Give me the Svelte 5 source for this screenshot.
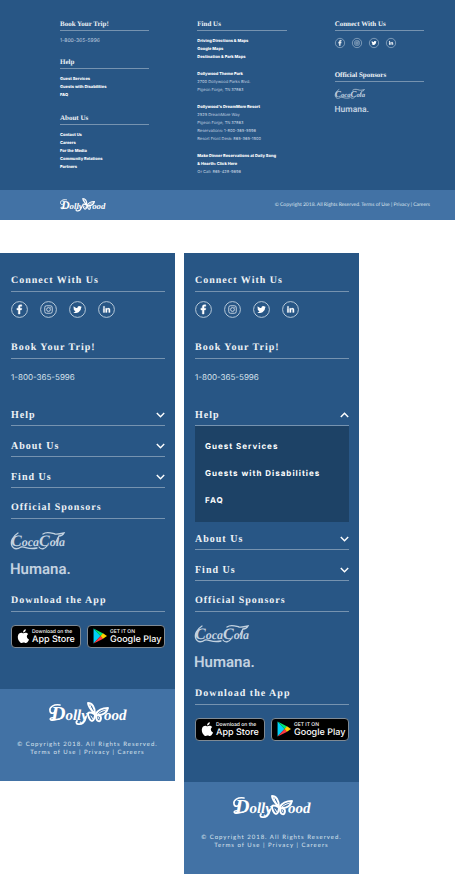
<script>
  const helpLinks = ['Guest Services', 'Guests with Disabilities', 'FAQ'];
  const aboutLinks = ['Contact Us', 'Careers', 'For the Media', 'Community Relations', 'Partners'];
  const mapLinks = ['Driving Directions & Maps', 'Google Maps', 'Destination & Park Maps'];
  const legalLinks = ['Terms of Use', 'Privacy', 'Careers'];
  const networks = ['Facebook', 'Instagram', 'Twitter', 'LinkedIn'];

  const accordion = [
    { title: 'Help', links: helpLinks },
    { title: 'About Us', links: aboutLinks },
    { title: 'Find Us', links: mapLinks }
  ];

  let panels = $state([{ open: null }, { open: 'Help' }]);

  function toggle(panel, title) {
    panel.open = panel.open === title ? null : title;
  }
</script>

{#snippet social()}
  <nav class="social" aria-label="Social networks">
    {#each networks as name}
      <a href="#social" aria-label={name}>
        <svg viewBox="0 0 34 34">
          <circle cx="17" cy="17" r="15.8" fill="none" stroke="#c3d2e0" stroke-width="1.8" />
          {#if name === 'Facebook'}
            <path fill="#fff" stroke="#fff" stroke-width=".8" d="M14.600 26v-8.200h-2.800v-3.400h2.800V12c0-3 1.700-4.600 4.400-4.600 1.200 0 2.200.1 2.600.2v3.100h-1.800c-1.400 0-1.700.7-1.700 1.700v2h3.400l-.5 3.400h-2.900V26z" />
          {:else if name === 'Instagram'}
            <g fill="none" stroke="#dbe4ed" stroke-width="1.7">
              <rect x="9.500" y="9.500" width="15" height="15" rx="3.500" />
              <circle cx="17" cy="17" r="3.800" />
            </g>
            <circle cx="21.500" cy="12.500" r="1" fill="#dbe4ed" />
          {:else if name === 'Twitter'}
            <path fill="#fff" d="M25.500 11.500c-.6.3-1.200.5-1.900.6.7-.4 1.200-1.100 1.500-1.900-.7.4-1.400.7-2.200.8a3.600 3.600 0 0 0-6.100 3.200c-3-.1-5.600-1.600-7.300-3.800-.9 1.700-.5 3.700 1.100 4.800-.6 0-1.100-.2-1.600-.4 0 1.700 1.200 3.200 2.900 3.500-.5.100-1 .2-1.600.1.500 1.400 1.800 2.400 3.400 2.500a7.200 7.200 0 0 1-5.200 1.500 10.200 10.200 0 0 0 15.700-9c.6-.5 1-1.200 1.300-1.900z" />
          {:else}
            <path fill="#fff" stroke="#fff" stroke-width=".5" d="M10.500 14.500h2.900V23h-2.900zM12 10.300a1.700 1.700 0 1 1 0 3.400 1.700 1.700 0 0 1 0-3.400zM15.200 14.500H18v1.200c.4-.8 1.400-1.500 2.700-1.500 2.900 0 3.500 1.900 3.500 4.200V23h-2.900v-4.100c0-1 0-2.200-1.400-2.200s-1.700 1-1.700 2.100V23h-3z" />
          {/if}
        </svg>
      </a>
    {/each}
  </nav>
{/snippet}

{#snippet sponsors()}
  <svg class="coke" viewBox="0 0 54 18" role="img" aria-label="Coca-Cola">
    <text class="script" x="0" y="14" font-size="12" fill="#c3d2e0"><tspan font-size="16">C</tspan>oca<tspan font-size="16">C</tspan>ola</text>
    <g fill="none" stroke="#c3d2e0" stroke-width="1.300" stroke-linecap="round">
      <path d="M7 1C2 4-1 10 1 14s6 3 9 1c4-1 7 3 16 1" />
      <path d="M28 15c2 3 6 2 8-1M32 2c4-3 8-1 12 0 3 .5 5 0 9-1-1 2-3 3-5 3l-3 6" />
    </g>
  </svg>
  <svg class="humana" viewBox="0 0 58 14" role="img" aria-label="Humana">
    <text x="-1" y="13" font-size="15" fill="#c3d2e0">Humana.</text>
  </svg>
{/snippet}

{#snippet dollywood()}
  <svg class="dollywood" viewBox="0 0 77 23" role="img" aria-label="Dollywood">
    <text class="script" x="2" y="18" font-size="15" fill="#fff"><tspan font-size="20">D</tspan>olly<tspan x="55">ood</tspan></text>
    <g fill="none" stroke="#fff" stroke-linecap="round" stroke-linejoin="round">
      <path stroke-width="1.600" d="M11 3C5 2 0 5 1 9c.5 3 5 3 5 0M5 16c-3-1-5 1-3 2 3 1 6-1 8-1" />
      <path stroke-width="1.800" d="M37 15c-1 5-4 8-8 7-2 0-2-2-1-3" />
      <path stroke-width="1.900" d="M46 12C43 9 39 5 39 1c4 0 7 4 7 11M45 12c-3-2-6-2-6 0s2 7 4 7 3-4 3-7" />
      <path stroke-width="1.900" d="M47 12c2-4 6-6 12-6-1 4-4 7-10 7M47 13c3 0 5 1 5 3s-1 4-3 3-2-3-2-6" />
      <path stroke-width="1" d="M41 3c1 4 3 6 5 9M49 12c3-3 5-3 8-4M42 14l2 3M49 15l1 2" />
    </g>
  </svg>
{/snippet}

{#snippet legal()}
  {#each legalLinks as item, i}{#if i > 0}{' | '}{/if}<a href="#legal">{item}</a>{/each}
{/snippet}

<main>
  <footer class="desktop">
    <div class="columns">
      <div>
        <section>
          <h2>Book Your Trip!</h2>
          <p class="phone"><a href="tel:18003655996">1-800-365-5996</a></p>
        </section>
        <section>
          <h2>Help</h2>
          <ul>
            {#each helpLinks as item}<li><a href="#help">{item}</a></li>{/each}
          </ul>
        </section>
        <section class="about">
          <h2>About Us</h2>
          <ul>
            {#each aboutLinks as item}<li><a href="#about">{item}</a></li>{/each}
          </ul>
        </section>
      </div>
      <section>
        <h2>Find Us</h2>
        <ul>
          {#each mapLinks as item}<li><a href="#maps">{item}</a></li>{/each}
        </ul>
        <p><b>Dollywood Theme Park</b><br />2700 Dollywood Parks Blvd.<br />Pigeon Forge, TN 37863</p>
        <p>
          <b>Dollywood's DreamMore Resort</b><br />2525 DreamMore Way<br />Pigeon Forge, TN 37863<br />
          Reservations: 1-800-365-5996<br />Resort Front Desk: 865-365-1900
        </p>
        <p>
          <a class="strong" href="#dinner">Make Dinner Reservations at Daily Song<br />&amp; Hearth: Click Here</a><br />
          Or Call: 865-428-9696
        </p>
      </section>
      <div class="connect">
        <section>
          <h2>Connect With Us</h2>
          {@render social()}
        </section>
        <section>
          <h2>Official Sponsors</h2>
          {@render sponsors()}
        </section>
      </div>
    </div>
    <div class="bar">
      {@render dollywood()}
      <p>© Copyright 2018. All Rights Reserved. {@render legal()}</p>
    </div>
  </footer>

  <div class="phones">
    {#each panels as panel}
      <footer class="mobile">
        <div class="body">
          <h2>Connect With Us</h2>
          {@render social()}
          <h2>Book Your Trip!</h2>
          <p class="phone"><a href="tel:18003655996">1-800-365-5996</a></p>
          <div class="accordion">
            {#each accordion as group}
              {@const open = panel.open === group.title}
              <h2>
                <button aria-expanded={open} onclick={() => toggle(panel, group.title)}>
                  {group.title}
                  <svg class="chevron" class:open viewBox="0 0 9 6"><path d="M.8 1 4.500 4.800 8.200 1" /></svg>
                </button>
              </h2>
              {#if open}
                <ul>
                  {#each group.links as item}<li><a href="#menu">{item}</a></li>{/each}
                </ul>
              {/if}
            {/each}
          </div>
          <h2>Official Sponsors</h2>
          {@render sponsors()}
          <h2 class="download">Download the App</h2>
          <div class="stores">
            <a href="#appstore">
              <svg class="apple" viewBox="0 0 22 26">
                <path fill="#fff" d="M18 13.800c0-3 2.500-4.500 2.600-4.600-1.400-2.100-3.600-2.300-4.400-2.400-1.900-.2-3.700 1.100-4.600 1.100-1 0-2.400-1.100-4-1.100C5.600 6.900 3.600 8 2.500 9.900c-2.200 3.900-.6 9.600 1.600 12.700 1.100 1.500 2.300 3.200 4 3.200 1.600-.1 2.200-1 4.100-1s2.500 1 4.200 1c1.700 0 2.800-1.500 3.900-3.100 1.200-1.800 1.700-3.500 1.700-3.600-.1 0-4-1.500-4-5.300zM14.900 4.700C15.700 3.600 16.300 2.100 16.200.600c-1.300.1-2.800.9-3.700 1.900-.8.9-1.500 2.400-1.300 3.800 1.400.1 2.800-.7 3.700-1.600z" />
              </svg>
              <span><small>Download on the</small>App Store</span>
            </a>
            <a href="#googleplay">
              <svg class="play" viewBox="0 0 26 30">
                <path fill="#00d0f7" d="M1 1v28l13-14z" />
                <path fill="#00e676" d="M1 1l18 9-5 5z" />
                <path fill="#ff3a44" d="M1 29l13-14 5 5z" />
                <path fill="#ffd000" d="M18.500 9.800 26 15l-7.500 5.200L14 15z" />
              </svg>
              <span><small>GET IT ON</small>Google Play</span>
            </a>
          </div>
        </div>
        <div class="base">
          {@render dollywood()}
          <p>© Copyright 2018. All Rights Reserved.<br />{@render legal()}</p>
        </div>
      </footer>
    {/each}
  </div>
</main>

<style>
  :global(body) {
    margin: 0;
    background: #fff;
  }
  main {
    font-family: Inter, 'Open Sans', sans-serif;
    color: #fff;
    text-rendering: geometricPrecision;
  }
  h2,
  p,
  ul {
    margin: 0;
    padding: 0;
    list-style: none;
  }
  a {
    color: inherit;
    text-decoration: none;
  }
  svg {
    display: block;
    overflow: visible;
  }
  h2 {
    color: #edf2f6;
    font-family: 'Liberation Serif', serif;
    font-weight: 700;
    border-bottom: 1px solid #7693b0;
  }
  .social {
    display: flex;
  }
  .script {
    font-family: 'Liberation Serif', serif;
    font-style: italic;
    font-weight: 700;
  }
  .humana {
    font-family: Roboto, sans-serif;
    font-weight: 600;
  }

  .desktop {
    background: #285685;
    font-size: 4px;
    line-height: 8px;
  }
  .desktop h2 {
    font-size: 7px;
    line-height: 10px;
    padding-bottom: 1px;
    margin-bottom: 6px;
  }
  .columns {
    display: grid;
    grid-template-columns: repeat(3, 1fr);
    gap: 48px;
    padding: 19px 31px 14px 60px;
  }
  .columns li,
  .columns b,
  .strong {
    font-weight: 800;
    color: #fff;
  }
  .columns p {
    color: #c3d2e0;
    margin-top: 9px;
  }
  .columns p.phone {
    font-size: 5px;
    margin-top: 0;
  }
  .columns section + section {
    margin-top: 12px;
  }
  .columns section + .about {
    margin-top: 14px;
  }
  .desktop .social {
    margin-top: 7px;
    gap: 7px;
  }
  .desktop .social svg {
    width: 10px;
  }
  .columns .connect section + section {
    margin-top: 22px;
  }
  .desktop .coke {
    width: 30px;
    margin-top: 7px;
  }
  .desktop .humana {
    width: 33px;
    margin-top: 6px;
  }
  .bar {
    display: flex;
    align-items: center;
    justify-content: space-between;
    min-height: 30px;
    padding: 0 25px 0 60px;
    background: #4272a5;
    font-family: Lato, sans-serif;
    font-size: 5px;
    color: #dbe4ed;
  }
  .bar .dollywood {
    width: 45px;
  }

  .phones {
    display: grid;
    grid-template-columns: 175fr 175fr 87fr;
    gap: 9px;
    align-items: start;
    margin-top: 33px;
  }
  .mobile {
    background: #285685;
  }
  .body {
    padding: 20px 10px 41px 11px;
  }
  .mobile h2 {
    font-size: 10px;
    line-height: 15px;
    letter-spacing: 1px;
    padding-bottom: 3px;
  }
  .mobile .social {
    gap: 12px;
    margin: 9px 0 22px;
  }
  .mobile .social svg {
    width: 17px;
  }
  .mobile .phone {
    margin: 12px 0 24px;
    font-size: 8px;
    line-height: 12px;
    color: #dbe4ed;
  }
  .accordion h2 {
    margin-bottom: 12px;
  }
  button {
    display: flex;
    align-items: center;
    justify-content: space-between;
    width: 100%;
    padding: 0;
    border: 0;
    background: none;
    color: inherit;
    font: inherit;
    letter-spacing: inherit;
    cursor: pointer;
  }
  .chevron {
    width: 9px;
    fill: none;
    stroke: #fff;
    stroke-width: 1.4;
  }
  .chevron.open {
    transform: rotate(180deg);
  }
  .accordion ul {
    margin: -12px 0 9px;
    padding: 7px 10px 8px;
    background: #1d4266;
    font-size: 8px;
    font-weight: 700;
    letter-spacing: 1px;
    line-height: 27px;
  }
  .mobile .coke {
    width: 54px;
    margin: 13px 0 11px;
  }
  .mobile .humana {
    width: 58px;
  }
  .mobile .download {
    margin: 18px 0 13px;
  }
  .stores {
    display: grid;
    grid-template-columns: 70fr 78fr;
    gap: 6px;
  }
  .stores a {
    display: flex;
    align-items: center;
    gap: 3px;
    height: 23px;
    padding-left: 5px;
    box-sizing: border-box;
    border: 1px solid #7f8a94;
    border-radius: 4px;
    background: #000;
    font-size: 9px;
    font-weight: 500;
    line-height: 10px;
    white-space: nowrap;
  }
  .stores small {
    display: block;
    font-size: 5px;
    line-height: 6px;
  }
  .apple {
    width: 12px;
  }
  .play {
    width: 14px;
  }
  .base {
    display: flex;
    flex-direction: column;
    align-items: center;
    gap: 16px;
    padding: 13px 0 24px;
    background: #4272a5;
    font-family: Lato, sans-serif;
    font-size: 6px;
    letter-spacing: 1px;
    line-height: 8px;
    color: #dbe4ed;
    text-align: center;
  }
  .base .dollywood {
    width: 77px;
    letter-spacing: 0;
  }
</style>
